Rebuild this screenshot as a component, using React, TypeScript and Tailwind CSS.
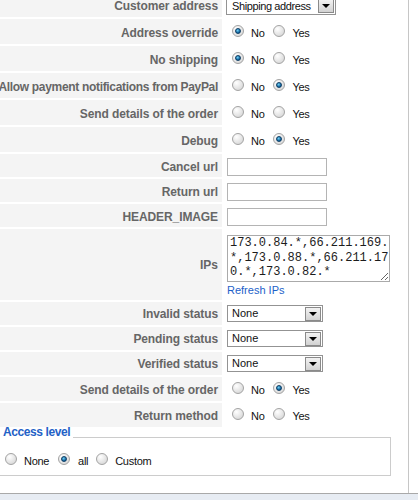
import React from "react";

const font = { fontFamily: '"Liberation Sans", Arial, sans-serif' };

function Radio({ on }: { on?: boolean }) {
  return (
    <span className="relative inline-block w-[12px] h-[12px] shrink-0 rounded-full border border-[#a3a3a3] bg-[radial-gradient(circle_at_35%_30%,#ffffff,#cfcfcf)]">
      {on && (
        <span className="absolute inset-[2px] rounded-full border border-[#0d3c63] bg-[radial-gradient(circle_at_40%_35%,#6fd0f5,#0b5d99_70%)]" />
      )}
    </span>
  );
}

function Arrow() {
  return (
    <span className="flex items-center justify-center w-[16px] h-[14px] border border-[#8a8a8a] bg-[linear-gradient(#f2f2f2,#d2d2d2)]">
      <span className="w-0 h-0 border-l-[4px] border-r-[4px] border-t-[4px] border-l-transparent border-r-transparent border-t-black" />
    </span>
  );
}

// pick: "no" | "yes" | "none"
function YesNo({ pick }: { pick: "no" | "yes" | "none" }) {
  return (
    <div className="flex items-center text-[11px] text-[#111] tracking-[-0.3px]">
      <span className="ml-[5px]"><Radio on={pick === "no"} /></span>
      <span className="ml-[7px]">No</span>
      <span className="ml-[9px]"><Radio on={pick === "yes"} /></span>
      <span className="ml-[7px]">Yes</span>
    </div>
  );
}

function StatusSelect() {
  return (
    <div className="flex items-center justify-between w-[96px] h-[17px] border border-[#939393] bg-white pl-[4px] pr-px text-[11px] text-[#111]">
      <span>None</span>
      <Arrow />
    </div>
  );
}

function TextInput() {
  return <div className="w-[100px] h-[18px] border border-[#b4b4b4] bg-white" />;
}

type Row = { label: string; h: string; pt?: string; tight?: boolean; value: React.ReactNode };

const rows: Row[] = [
  {
    label: "Customer address",
    h: "h-[25px]",
    pt: "pt-[3px]",
    value: (
      <div className="-ml-px flex items-center justify-between w-[110px] h-[18px] border border-[#939393] bg-white pl-[5px] pr-px text-[11px] text-[#111] tracking-[-0.4px]">
        <span>Shipping address</span>
        <Arrow />
      </div>
    ),
  },
  { label: "Address override", h: "h-[25px]", pt: "pt-[3px]", value: <YesNo pick="no" /> },
  { label: "No shipping", h: "h-[25px]", pt: "pt-[3px]", value: <YesNo pick="no" /> },
  { label: "Allow payment notifications from PayPal", h: "h-[25px]", pt: "pt-[3px]", tight: true, value: <YesNo pick="yes" /> },
  { label: "Send details of the order", h: "h-[25px]", pt: "pt-[3px]", value: <YesNo pick="none" /> },
  { label: "Debug", h: "h-[25px]", pt: "pt-[3px]", value: <YesNo pick="yes" /> },
  { label: "Cancel url", h: "h-[23px]", pt: "pt-[2px]", value: <TextInput /> },
  { label: "Return url", h: "h-[23px]", pt: "pt-[2px]", value: <TextInput /> },
  { label: "HEADER_IMAGE", h: "h-[23px]", pt: "pt-[2px]", value: <TextInput /> },
];

const rows2: Row[] = [
  { label: "Invalid status", h: "h-[23px]", value: <StatusSelect /> },
  { label: "Pending status", h: "h-[23px]", value: <StatusSelect /> },
  { label: "Verified status", h: "h-[23px]", value: <StatusSelect /> },
  { label: "Send details of the order", h: "h-[24px]", pt: "pt-[2px]", value: <YesNo pick="yes" /> },
  { label: "Return method", h: "h-[24px]", pt: "pt-[2px]", value: <YesNo pick="none" /> },
];

function FormRow({ row }: { row: Row }) {
  return (
    <div className={`flex ${row.h}`}>
      <div className={`w-[222px] shrink-0 bg-[#f4f4f4] flex items-center justify-end pr-[4px] ${row.pt ?? ""}`}>
        <span
          className={`whitespace-nowrap text-[12px] leading-[14px] font-bold text-[#666] ${
            row.tight ? "tracking-[-0.32px]" : "tracking-[-0.1px]"
          }`}
        >
          {row.label}
        </span>
      </div>
      <div className={`flex-1 flex items-center pl-[5px] ${row.pt ?? ""}`}>{row.value}</div>
    </div>
  );
}

export default function App() {
  return (
    <div className="w-[418px] h-[500px] overflow-hidden bg-white flex flex-col" style={font}>
      <div className="w-[409px] h-[493px] shrink-0 border-r border-[#c6c6c6] overflow-hidden">
        <div className="-mt-[8px] flex flex-col gap-[2px]">
          {rows.map((r) => (
            <FormRow key={r.label} row={r} />
          ))}
          <div className="flex h-[71px]">
            <div className="w-[222px] shrink-0 bg-[#f4f4f4] flex items-center justify-end pr-[4px]">
              <span className="text-[12px] leading-[14px] font-bold text-[#666]">IPs</span>
            </div>
            <div className="flex-1 flex flex-col items-start pl-[5px] pt-[6px]">
              <textarea
                readOnly
                value="173.0.84.*,66.211.169.*,173.0.88.*,66.211.170.*,173.0.82.*"
                className="w-[163px] h-[47px] border border-[#aaa] pl-[2px] py-0 text-[12px] leading-[14.5px] text-[#1c1c1c] break-all overflow-hidden outline-none"
                style={{ fontFamily: '"Liberation Mono", "Courier New", monospace' }}
              />
              <a className="text-[11px] leading-[14px] text-[#1d5fc9] mt-px">Refresh IPs</a>
            </div>
          </div>
          {rows2.map((r) => (
            <FormRow key={r.label + "2"} row={r} />
          ))}
        </div>
        <div className="-mt-[2px] w-[391px]">
          <div className="flex h-[14px]">
            <span className="pl-[3px] text-[12px] leading-[14px] font-bold text-[#2361c6] tracking-[-0.4px]">
              Access level
            </span>
            <div className="flex-1 ml-[3px] self-end mb-[1px] h-px bg-[#cccccc]" />
            <div className="w-px bg-[#cccccc] self-end h-[2px]" />
          </div>
          <div className="h-[37px] border-r border-b border-[#cccccc] flex items-center pt-[9px] text-[11px] text-[#111] tracking-[-0.3px]">
            <span className="ml-[5px]"><Radio /></span>
            <span className="ml-[7px]">None</span>
            <span className="ml-[9px]"><Radio on /></span>
            <span className="ml-[8px]">all</span>
            <span className="ml-[8px]"><Radio /></span>
            <span className="ml-[7px]">Custom</span>
          </div>
        </div>
      </div>
      <div className="flex-1 border-t border-[#a9a9a9] bg-[#e7ecf3]" />
    </div>
  );
}
